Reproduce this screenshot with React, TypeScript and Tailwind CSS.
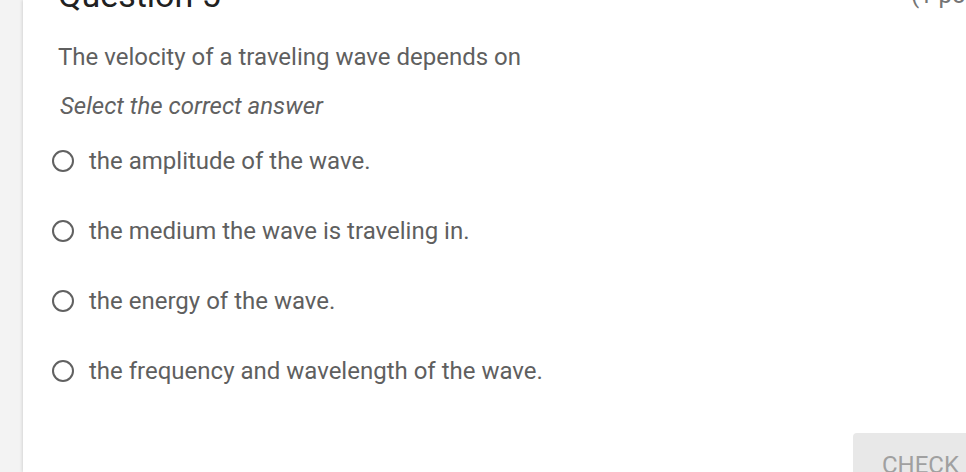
const options = [
  "the amplitude of the wave.",
  "the medium the wave is traveling in.",
  "the energy of the wave.",
  "the frequency and wavelength of the wave.",
];

export default function App() {
  return (
    <div className="h-[472px] w-[966px] overflow-hidden bg-[#f3f3f3] pl-[23px] font-['Roboto',sans-serif]">
      <div className="flow-root h-full bg-white shadow-[-1px_0_3px_rgba(0,0,0,0.12)]">
        {/* Header, scrolled partly out of view */}
        <div className="-mt-[25px] flex h-[40px] items-end justify-between pl-[35px]">
          <h2 className="text-[34px] leading-[40px] text-[#212121]">Question 5</h2>
          <span className="mr-[-35px] text-[24px] leading-[40px] text-[#757575]">(1 point)</span>
        </div>

        <p className="mt-[27px] pl-[35px] text-[24px] leading-[30px] text-[#5f5f5f]">
          The velocity of a traveling wave depends on
        </p>
        <p className="mt-[20px] pl-[37px] text-[24px] italic leading-[28px] text-[#616161]">
          Select the correct answer
        </p>

        <div className="mt-[6px] flex flex-col">
          {options.map((opt) => (
            <label key={opt} className="flex h-[70px] items-center gap-[16px] pl-[29px]">
              <span className="h-[22px] w-[22px] shrink-0 rounded-full border-[2.5px] border-[#616161]" />
              <span className="-ml-[1px] text-[24px] text-[#5f5f5f]">{opt}</span>
            </label>
          ))}
        </div>

        <div className="mt-[27px] flex justify-end">
          <button className="mr-[-23px] h-[50px] rounded-tl-[4px] bg-[#e8e8e8] pl-[29px] pr-[30px] pt-[14px] text-[24px] leading-[28px] text-[#a0a0a0]">
            CHECK
          </button>
        </div>
      </div>
    </div>
  );
}
